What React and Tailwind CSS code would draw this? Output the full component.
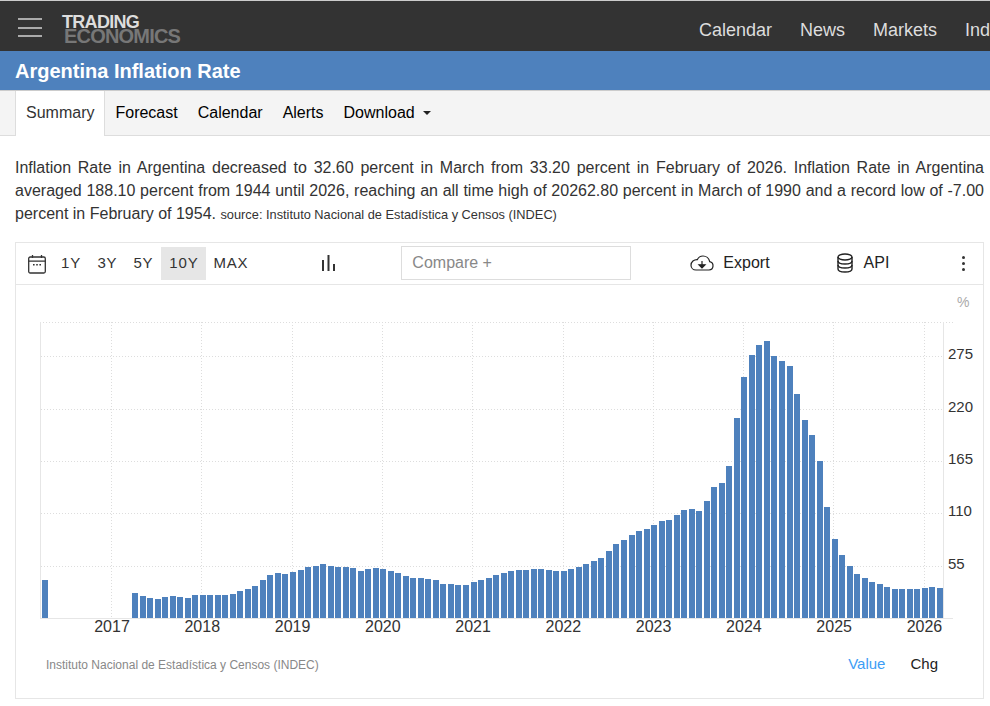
import { useMemo } from 'react';

const SANS = 'font-["Liberation_Sans",Arial,sans-serif]';

// bar heights in px, April 2017 to March 2026
const BAR_HEIGHTS = [
  25, 22, 20, 19, 21, 22, 21, 20, 23,
  23, 23, 23, 23, 24, 27, 29, 32, 38, 43, 45, 44,
  46, 48, 51, 52, 54, 52, 51, 51, 50, 47, 49, 50,
  49, 47, 45, 42, 40, 40, 39, 38, 34, 34, 33, 33,
  36, 38, 40, 43, 45, 47, 48, 48, 49, 49, 48, 47,
  47, 49, 51, 54, 57, 60, 67, 74, 78, 83, 87, 89,
  93, 97, 98, 103, 108, 109, 107, 117, 131, 135, 152, 200,
  241, 263, 273, 277, 262, 257, 252, 224, 198, 183, 157, 111,
  79, 63, 52, 44, 40, 36, 34, 31, 29, 29, 29, 29,
  30, 31, 30,
];

const YEARS = [2017, 2018, 2019, 2020, 2021, 2022, 2023, 2024, 2025, 2026];
const Y_TICKS = [
  { label: '275', y: 356 },
  { label: '220', y: 409 },
  { label: '165', y: 461 },
  { label: '110', y: 513 },
  { label: '55', y: 566 },
];

function Chart() {
  const bars = useMemo(
    () => BAR_HEIGHTS.map((h, i) => ({ x: Math.round(132 + 7.523 * i), h })),
    []
  );

  return (
    <svg viewBox="16 285 967 355" className="block h-[355px] w-[967px]">
      <line x1="40" y1="322.5" x2="953" y2="322.5" stroke="#ddd" strokeDasharray="1 2" />
      {Y_TICKS.map((t) => (
        <line key={t.label} x1="41" y1={t.y + 0.5} x2="943" y2={t.y + 0.5} stroke="#ddd" strokeDasharray="1 2" />
      ))}
      {YEARS.map((year, i) => {
        const x = Math.floor(111.7 + 90.27 * i) + 0.5;
        return <line key={year} x1={x} y1="322" x2={x} y2="618" stroke="#ddd" strokeDasharray="1 2" />;
      })}
      <line x1="40.5" y1="322" x2="40.5" y2="618" stroke="#e6e6e6" />
      <line x1="943.5" y1="322" x2="943.5" y2="618" stroke="#e6e6e6" />
      <line x1="40" y1="618.5" x2="953" y2="618.5" stroke="#e6e6e6" />

      <g fill="#4e81bd" shapeRendering="crispEdges">
        <rect x="42" y="580" width="6" height="38" />
        {bars.map((b) => (
          <rect key={b.x} x={b.x} y={618 - b.h} width="6" height={b.h} />
        ))}
      </g>

      <g fontFamily="'Liberation Sans', Arial, sans-serif">
        {YEARS.map((year, i) => (
          <text key={year} x={112 + 90.27 * i} y="632" textAnchor="middle" fontSize="16" fill="#333">
            {year}
          </text>
        ))}
        {Y_TICKS.map((t) => (
          <text key={t.label} x="948" y={t.y + 3} fontSize="15" fill="#333">
            {t.label}
          </text>
        ))}
        <text x="957" y="307" fontSize="14" fill="#aaa">%</text>
      </g>
    </svg>
  );
}

function RangeButton({ children, active }) {
  return (
    <button className={`flex h-[33px] items-center justify-center px-2 text-[15px] tracking-[0.8px] text-[#333] ${active ? 'bg-[#e6e6e6]' : ''}`}>
      {children}
    </button>
  );
}

export default function App() {
  return (
    <div className={`min-h-[706px] overflow-hidden bg-white ${SANS}`}>
      {/* Top nav */}
      <div className="border-t border-[#ccc] bg-[#333]">
        <div className="flex h-[50px] items-center whitespace-nowrap">
          <div className="ml-[18px] mt-[3px] flex w-6 flex-col gap-[6.5px]">
            <div className="h-[2px] bg-[#aaa]" />
            <div className="h-[2px] bg-[#aaa]" />
            <div className="h-[2px] bg-[#aaa]" />
          </div>
          <div className="ml-5 mt-[6px] flex flex-col font-bold">
            <span className="text-[18px] leading-[14px] tracking-[-0.7px] text-[#ddd]">TRADING</span>
            <span className="ml-[2px] text-[20px] leading-[15px] tracking-[-0.8px] text-[#777]">ECONOMICS</span>
          </div>
          <div className="ml-auto flex w-[291px] shrink-0 gap-7 overflow-hidden pt-2 text-[18px] text-[#ddd]">
            <a href="#">Calendar</a>
            <a href="#">News</a>
            <a href="#">Markets</a>
            <a href="#">Indicators</a>
          </div>
        </div>
      </div>

      {/* Title bar */}
      <div className="flex h-10 items-center border-b border-[#ccc] bg-[#4e81bd] px-[15px] pt-[1px]">
        <h1 className="text-[20px] font-bold text-white">Argentina Inflation Rate</h1>
      </div>

      {/* Tabs */}
      <div className="flex h-[45px] border-b border-[#ddd] bg-[#f4f4f4] pl-[15px] text-[16px] text-black">
        <a href="#" className="-mb-px flex items-center border-x border-[#ddd] bg-white px-[10px] pb-[2px] text-[#333]">Summary</a>
        <div className="ml-[10px] flex items-center gap-5">
          <a href="#">Forecast</a>
          <a href="#">Calendar</a>
          <a href="#">Alerts</a>
          <a href="#" className="flex items-center gap-2">
            Download
            <span className="h-0 w-0 border-x-4 border-t-4 border-x-transparent border-t-[#222]" />
          </a>
        </div>
      </div>

      {/* Description */}
      <p className="ml-[15px] mr-[6px] mt-[20px] text-justify text-[16px] leading-[23px] text-[#333]">
        Inflation Rate in Argentina decreased to 32.60 percent in March from 33.20 percent in February of 2026. Inflation Rate in Argentina averaged 188.10 percent from 1944 until 2026, reaching an all time high of 20262.80 percent in March of 1990 and a record low of -7.00 percent in February of 1954.{' '}
        <span className="text-[12.8px]">source: Instituto Nacional de Estadística y Censos (INDEC)</span>
      </p>

      {/* Chart card */}
      <div className="ml-[15px] mr-[6px] mt-[16px] h-[457px] border border-[#e6e6e6]">
        <div className="flex h-[42px] items-center border-b border-[#e6e6e6] text-[#222]">
          <svg viewBox="0 0 20 20" className="ml-[11px] h-5 w-5" fill="none" stroke="#333" strokeWidth="1.3">
            <rect x="1.7" y="3" width="16.6" height="16" rx="1.5" />
            <path d="M1.7 7.2h16.6M5.5 1v3M14.5 1v3" />
            <path d="M6 10.8h1.6M9.2 10.8h1.6M12.4 10.8h1.6" strokeWidth="1.6" />
          </svg>
          <div className="ml-[6px] flex">
            <RangeButton>1Y</RangeButton>
            <div className="ml-[0.5px]"><RangeButton>3Y</RangeButton></div>
            <RangeButton>5Y</RangeButton>
            <RangeButton active>10Y</RangeButton>
            <div className="-ml-[1px]"><RangeButton>MAX</RangeButton></div>
          </div>
          <svg viewBox="0 0 16 18" className="ml-[65px] h-[18px] w-4 -mt-[2px]" fill="#333">
            <rect x="1" y="6" width="2" height="11" />
            <rect x="6.5" y="1" width="2" height="16" />
            <rect x="12" y="10" width="2" height="7" />
          </svg>
          <div className="ml-[64px] -mt-[2px] flex h-[34px] w-[230px] items-center border border-[#ddd] px-[10px] text-[16px] text-[#888]">
            Compare +
          </div>
          <div className="ml-[59px] -mt-[2px] flex items-center gap-[9px] text-[16px]">
            <svg viewBox="0 0 24 16" className="h-[16px] w-[24px]" fill="none" stroke="#222" strokeWidth="1.2">
              <path d="M6 15h13a4.2 4.2 0 0 0 .7-8.3C19 3.2 16 1 13 1c-2.7 0-4.7 1.6-5.6 3.6C4 4.4 1 6.8 1 10.2 1 13 3.2 15 6 15z" />
              <path d="M12 6v5.5M9 9.8h6l-3 3z" fill="#222" />
            </svg>
            Export
          </div>
          <div className="ml-[67px] -mt-[2px] flex items-center gap-[11px] text-[16px]">
            <svg viewBox="0 0 16 20" className="h-5 w-4" fill="none" stroke="#222" strokeWidth="1.4">
              <ellipse cx="8" cy="4" rx="7" ry="3" />
              <path d="M1 4v12c0 1.7 3.1 3 7 3s7-1.3 7-3V4" />
              <path d="M1 8c0 1.7 3.1 3 7 3s7-1.3 7-3M1 12c0 1.7 3.1 3 7 3s7-1.3 7-3" />
            </svg>
            API
          </div>
          <div className="ml-auto mr-[18px] flex flex-col gap-[3px]">
            <span className="h-[3px] w-[3px] rounded-full bg-[#333]" />
            <span className="h-[3px] w-[3px] rounded-full bg-[#333]" />
            <span className="h-[3px] w-[3px] rounded-full bg-[#333]" />
          </div>
        </div>
        <Chart />
        <div className="flex items-center pl-[30px] pr-[45px] pt-[13px]">
          <span className="pt-[1px] text-[12px] text-[#888]">Instituto Nacional de Estadística y Censos (INDEC)</span>
          <span className="ml-auto text-[15px] text-[#3d9df5]">Value</span>
          <span className="ml-[25px] text-[15px] text-[#222]">Chg</span>
        </div>
      </div>
    </div>
  );
}
